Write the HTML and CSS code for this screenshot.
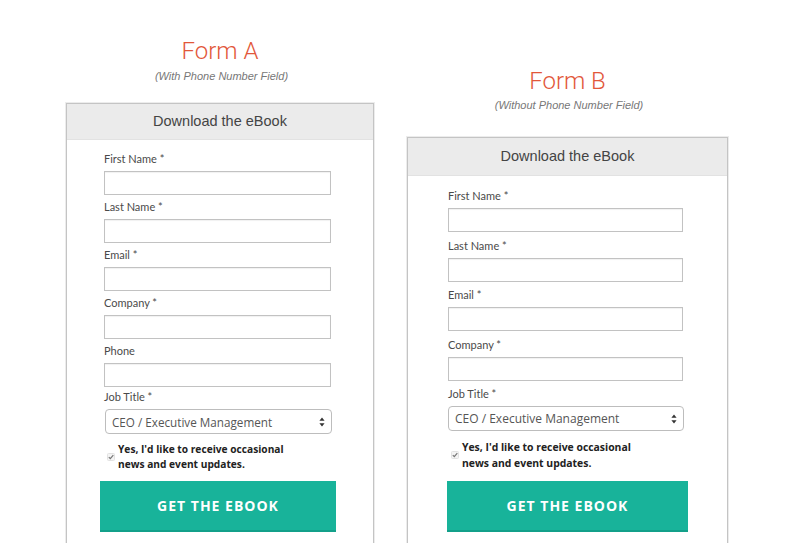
FILE: index.html
```html
<!DOCTYPE html>
<html lang="en">
<head>
<meta charset="utf-8">
<title>Form A vs Form B</title>
<link rel="stylesheet" href="styles.css">
</head>
<body>
<div class="page">
  <section class="col col--a">
    <h1 class="title">Form A</h1>
    <p class="subtitle">(With Phone Number Field)</p>
    <div class="card">
      <div class="card-head">Download the eBook</div>
      <form class="card-body">
        <label class="field"><span class="lbl">First Name *</span><span class="input"></span></label>
        <label class="field"><span class="lbl">Last Name *</span><span class="input"></span></label>
        <label class="field"><span class="lbl">Email *</span><span class="input"></span></label>
        <label class="field"><span class="lbl">Company *</span><span class="input"></span></label>
        <label class="field"><span class="lbl">Phone</span><span class="input"></span></label>
        <label class="field field--select"><span class="lbl">Job Title *</span>
          <span class="select">CEO / Executive Management
            <svg class="arrows" width="6" height="10" viewBox="0 0 6 10"><path d="M3 0.5 L5.6 3.8 H0.4 Z M3 9.5 L5.6 6.2 H0.4 Z" fill="#333"/></svg>
          </span>
        </label>
        <div class="optin">
          <svg class="check" width="8" height="8" viewBox="0 0 8 8"><rect x="0.5" y="0.5" width="7" height="7" rx="1" fill="#f4f4f4" stroke="#e2e2e2"/><path d="M1.8 4.2 L3.3 5.7 L6.3 2.2" fill="none" stroke="#777" stroke-width="1.2"/></svg>
          <p class="optin-text">Yes, I'd like to receive occasional<br>news and event updates.</p>
        </div>
        <div class="btn">GET THE EBOOK</div>
      </form>
    </div>
  </section>

  <section class="col col--b">
    <h1 class="title">Form B</h1>
    <p class="subtitle">(Without Phone Number Field)</p>
    <div class="card">
      <div class="card-head">Download the eBook</div>
      <form class="card-body">
        <label class="field"><span class="lbl">First Name *</span><span class="input"></span></label>
        <label class="field"><span class="lbl">Last Name *</span><span class="input"></span></label>
        <label class="field"><span class="lbl">Email *</span><span class="input"></span></label>
        <label class="field"><span class="lbl">Company *</span><span class="input"></span></label>
        <label class="field field--select"><span class="lbl">Job Title *</span>
          <span class="select">CEO / Executive Management
            <svg class="arrows" width="6" height="10" viewBox="0 0 6 10"><path d="M3 0.5 L5.6 3.8 H0.4 Z M3 9.5 L5.6 6.2 H0.4 Z" fill="#333"/></svg>
          </span>
        </label>
        <div class="optin">
          <svg class="check" width="8" height="8" viewBox="0 0 8 8"><rect x="0.5" y="0.5" width="7" height="7" rx="1" fill="#f4f4f4" stroke="#e2e2e2"/><path d="M1.8 4.2 L3.3 5.7 L6.3 2.2" fill="none" stroke="#777" stroke-width="1.2"/></svg>
          <p class="optin-text">Yes, I'd like to receive occasional<br>news and event updates.</p>
        </div>
        <div class="btn">GET THE EBOOK</div>
      </form>
    </div>
  </section>
</div>
</body>
</html>
```

FILE: styles.css
```css
* { box-sizing: border-box; }
html, body { margin: 0; padding: 0; background: #fff; }
body { overflow: hidden; height: 543px; }

.page {
  display: flex;
  align-items: flex-start;
  padding-left: 66px;
}

.col { display: flex; flex-direction: column; }
.col--a { width: 308px; padding-top: 37px; }
.col--b { width: 321px; margin-left: 33px; padding-top: 67px; }

.title {
  margin: 0;
  text-align: center;
  font-family: Roboto, "Liberation Sans", sans-serif;
  font-weight: 300;
  font-size: 24px;
  line-height: 28px;
  color: #e2573a;
}
.subtitle {
  margin: 4px 0 0;
  padding-left: 3px;
  text-align: center;
  font-family: "Liberation Sans", Arial, sans-serif;
  font-style: italic;
  font-size: 11px;
  line-height: 14px;
  color: #777;
}
.col--a .subtitle { margin-bottom: 20px; }
.col--b .subtitle { margin-top: 3px; margin-bottom: 25px; }

.card {
  border: 1px solid #c4c4c4;
  box-shadow: 0 0 0 1px #ececec;
  background: #fff;
  height: 470px;
}
.card-head {
  background: #ebebeb;
  text-align: center;
  font-family: "Liberation Sans", Arial, sans-serif;
  font-size: 14.5px;
  color: #444;
  border-bottom: 1px solid #e2e2e2;
}
.col--a .card-head { height: 36px; line-height: 35px; }
.col--b .card-head { height: 38px; line-height: 37px; }

.card-body {
  margin: 0;
  display: flex;
  flex-direction: column;
  padding-top: 12px;
}
.col--a .card-body { padding-left: 37px; }
.col--b .card-body { padding-left: 40px; }

.field { display: flex; flex-direction: column; }
.lbl {
  font-family: Lato, "Open Sans", sans-serif;
  font-size: 11px;
  line-height: 14px;
  color: #4a4a4a;
  margin-bottom: 5px;
}
.col--b .lbl { line-height: 15px; }
.input {
  display: block;
  height: 24px;
  border: 1px solid #c2c2c2;
  box-shadow: inset 0 1px 1px rgba(0,0,0,0.06);
  background: #fff;
  margin-bottom: 5px;
}
.col--a .input { width: 227px; }
.col--b .input { width: 235px; margin-bottom: 5.5px; }
.col--a .field--select { margin-top: -2px; }

.select {
  display: flex;
  align-items: center;
  justify-content: space-between;
  height: 25px;
  border: 1px solid #bdbdbd;
  border-radius: 4px;
  padding: 0 6px 0 6px;
  font-family: "Open Sans", sans-serif;
  font-size: 11.7px;
  color: #555;
  background: #fff;
}
.col--a .select { width: 227px; margin-left: 1px; }
.col--b .select { width: 236px; font-size: 12px; }
.arrows { flex: none; }

.optin {
  display: flex;
  align-items: center;
  padding-left: 3px;
  margin-top: 8px;
}
.check { flex: none; }
.optin-text {
  margin: 0 0 0 3px;
  font-family: "Open Sans", sans-serif;
  font-weight: 700;
  font-size: 10.2px;
  line-height: 15px;
  color: #222;
}
.col--b .optin-text { line-height: 16px; font-size: 10.4px; }

.btn {
  display: flex;
  align-items: center;
  justify-content: center;
  height: 51px;
  background: #18b39a;
  border-bottom: 2px solid #13a08a;
  font-family: "Open Sans", sans-serif;
  font-weight: 700;
  font-size: 14px;
  letter-spacing: 1px;
  color: #fff;
  margin-top: 9px;
}
.col--a .btn { width: 236px; margin-left: -4px; }
.col--b .btn { width: 241px; margin-left: -1px; margin-top: 10px; }
```
